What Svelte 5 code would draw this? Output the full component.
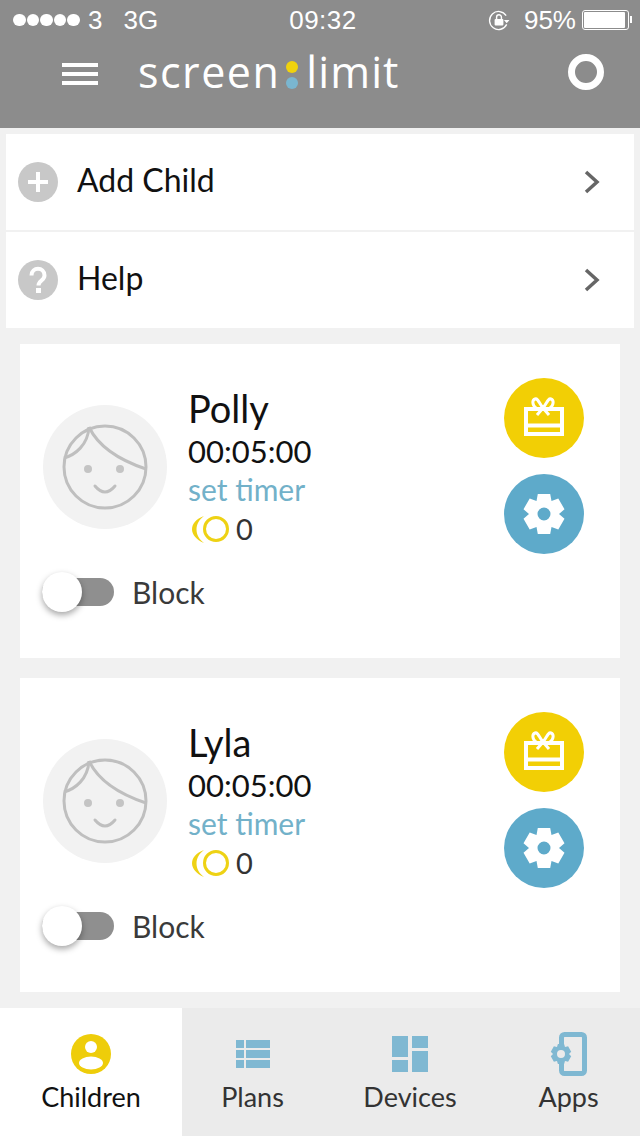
<script>
  const kids = [
    { name: "Polly", time: "00:05:00", coins: 0 },
    { name: "Lyla", time: "00:05:00", coins: 0 }
  ];
  const links = [
    { label: "Add Child", icon: "plus" },
    { label: "Help", icon: "help" }
  ];

  // cog outline, used by the settings button and the Apps tab
  function cog(cx, cy, outer, inner, hole) {
    let d = "";
    for (let i = 0; i < 6; i++) {
      const a = (i * Math.PI) / 3 - Math.PI / 2;
      const pts = [[inner, a - 0.52], [outer, a - 0.3], [outer, a + 0.3], [inner, a + 0.52]];
      for (const [r, t] of pts) {
        d += (d ? "L" : "M") + (cx + r * Math.cos(t)).toFixed(1) + " " + (cy + r * Math.sin(t)).toFixed(1);
      }
    }
    d += "Z";
    d += `M${cx - hole} ${cy}a${hole} ${hole} 0 1 0 ${hole * 2} 0a${hole} ${hole} 0 1 0 ${-hole * 2} 0Z`;
    return d;
  }
</script>

<div class="page">
  <header class="top">
    <div class="status">
      <div class="carrier">
        <span class="dots">
          {#each [0, 1, 2, 3, 4] as d}<i></i>{/each}
        </span>
        <span>3</span>
        <span class="net">3G</span>
      </div>
      <div class="clock">09:32</div>
      <div class="power">
        <svg class="lock" width="22" height="22" viewBox="0 0 20 20">
          <path d="M16.5 6A8.2 8.2 0 1 0 17 14" fill="none" stroke="#fff" stroke-width="1.2" />
          <path d="M14.5 10h5l-2.500 3z" fill="#fff" />
          <rect x="6" y="9" width="8" height="6" rx="1" fill="#fff" />
          <path d="M7.800 9V7.500a2.200 2.200 0 0 1 4.400 0V9" fill="none" stroke="#fff" stroke-width="1.300" />
        </svg>
        <span class="pct">95%</span>
        <span class="battery"><b></b></span>
      </div>
    </div>
    <nav class="bar">
      <div class="burger"><i></i><i></i><i></i></div>
      <div class="logo">
        <span>screen</span>
        <span class="colon"><i class="y"></i><i class="b"></i></span>
        <span class="limit">limit</span>
      </div>
      <div class="ring"></div>
    </nav>
  </header>

  <section class="links">
    {#each links as link}
      <div class="link">
        <span class="round">
          {#if link.icon === "plus"}
            <svg width="40" height="40" viewBox="0 0 40 40">
              <path d="M20 10v20M10 20h20" stroke="#fff" stroke-width="4" />
            </svg>
          {:else}
            <svg width="40" height="40" viewBox="0 0 40 40">
              <path d="M13.500 15.500c0-9 13-9 13 0 0 5-6 5-6 10" fill="none" stroke="#fff" stroke-width="4" />
              <rect x="18" y="28" width="5" height="5" fill="#fff" />
            </svg>
          {/if}
        </span>
        <span class="link_label">{link.label}</span>
        <svg class="chev" width="18" height="26" viewBox="0 0 18 26">
          <path d="M3 3l11 10L3 23" fill="none" stroke="#666" stroke-width="3.500" />
        </svg>
      </div>
    {/each}
  </section>

  {#each kids as kid}
    <article class="card">
      <div class="left">
        <div class="who">
          <svg class="avatar" width="124" height="124" viewBox="0 0 124 124">
            <circle cx="62" cy="62" r="62" fill="#f2f2f2" />
            <g fill="none" stroke="#bfbfbf" stroke-width="3">
              <circle cx="62" cy="62" r="41" />
              <path d="M46 22C57 45 82 57 103 64" />
              <path d="M46 22C45 40 32 50 21 53" />
              <path d="M52 81Q62 93 72 81" stroke-linecap="round" />
            </g>
            <circle cx="45" cy="64" r="4" fill="#c4c4c4" />
            <circle cx="77" cy="64" r="4" fill="#c4c4c4" />
          </svg>
          <div class="info">
            <div class="name">{kid.name}</div>
            <div class="time">{kid.time}</div>
            <div class="timer_link">set timer</div>
            <div class="coins">
              <svg width="38" height="30" viewBox="0 0 38 30">
                <circle cx="25" cy="15" r="11.500" fill="none" stroke="#eed214" stroke-width="3" />
                <path d="M13 2C-3 8-3 22 13 29C3 22 3 9 13 2Z" fill="#eed214" />
              </svg>
              <span>{kid.coins}</span>
            </div>
          </div>
        </div>
        <div class="block">
          <div class="toggle"><span class="thumb"></span></div>
          <span>Block</span>
        </div>
      </div>
      <div class="actions">
        <button class="act gift" aria-label="gift">
          <svg width="80" height="80" viewBox="0 0 80 80">
            <g fill="none" stroke="#fff" stroke-width="4">
              <path d="M22 56V31H58V56Z" />
              <path d="M22 47.500H58" />
              <path d="M39 30C35 25 34 20 31 21C28 22 28 27 32 30M39 30C43 25 44 20 47 21C50 22 50 27 46 30" stroke-width="3" />
              <path d="M39 30L33 37M39 30L45 37" stroke-width="3" />
            </g>
          </svg>
        </button>
        <button class="act gear" aria-label="settings">
          <svg width="80" height="80" viewBox="0 0 80 80">
            <path d={cog(40, 40, 21, 15, 6.5)} fill="#fff" fill-rule="evenodd" />
          </svg>
        </button>
      </div>
    </article>
  {/each}

  <footer class="tabs">
    <div class="tab on">
      <svg width="40" height="40" viewBox="0 0 40 40">
        <circle cx="20" cy="20" r="20" fill="#eecd0a" />
        <circle cx="20" cy="13" r="6" fill="#fff" />
        <ellipse cx="20" cy="29" rx="12" ry="6.500" fill="#fff" />
      </svg>
      <span>Children</span>
    </div>
    <div class="tab">
      <svg width="40" height="40" viewBox="0 0 40 40">
        <g fill="#7fb8d2">
          <rect x="3" y="6" width="8" height="8" />
          <rect x="13" y="6" width="24" height="8" />
          <rect x="3" y="16" width="8" height="8" />
          <rect x="13" y="16" width="24" height="8" />
          <rect x="3" y="26" width="8" height="8" />
          <rect x="13" y="26" width="24" height="8" />
        </g>
      </svg>
      <span>Plans</span>
    </div>
    <div class="tab">
      <svg width="40" height="40" viewBox="0 0 40 40">
        <g fill="#7fb8d2">
          <rect x="2" y="2" width="16" height="21" />
          <rect x="2" y="26" width="16" height="12" />
          <rect x="22" y="2" width="16" height="12" />
          <rect x="22" y="17" width="16" height="21" />
        </g>
      </svg>
      <span>Devices</span>
    </div>
    <div class="tab">
      <svg class="apps" width="40" height="46" viewBox="0 0 40 46">
        <path d="M12.500 13V6.500a3 3 0 0 1 3-3H32.500a3 3 0 0 1 3 3v33a3 3 0 0 1-3 3H15.500a3 3 0 0 1-3-3v-7" fill="none" stroke="#7fb8d2" stroke-width="5" />
        <path d={cog(12, 23, 10.5, 8, 4)} fill="#7fb8d2" fill-rule="evenodd" />
      </svg>
      <span>Apps</span>
    </div>
  </footer>
</div>

<style>
:global(body){
  margin: 0;
  background: #f1f1f1;
}

.page{
  width: 640px;
  height: 1136px;
  overflow: hidden;
  background: #f1f1f1;
  font-family: Lato, "Open Sans", sans-serif;
  display: flex;
  flex-direction: column;
}

.top{
  height: 128px;
  background: #8c8c8c;
  color: #fff;
  flex: none;
}

.status{
  height: 40px;
  padding: 0 11px 0 13px;
  display: grid;
  grid-template-columns: 1fr auto 1fr;
  align-items: center;
  font-family: "Liberation Sans", sans-serif;
  font-size: 26px;
}

.carrier{
  display: flex;
  align-items: center;
  gap: 8px;
}

.net{
  margin-left: 13px;
}

.dots{
  display: flex;
  gap: 1px;
}

.dots i{
  width: 12.600px;
  height: 12.600px;
  border-radius: 50%;
  background: #fff;
}

.clock{
  font-size: 26px;
  letter-spacing: .5px;
  padding-left: 4px;
}

.power{
  display: flex;
  justify-content: flex-end;
  align-items: center;
}

.lock{
  margin-right: 14px;
}

.pct{
  margin-right: 6px;
}

.battery{
  width: 43px;
  height: 16px;
  border: 1px solid #fff;
  border-radius: 3px;
  padding: 1px;
  position: relative;
  display: block;
}

.battery b{
  display: block;
  width: 95%;
  height: 100%;
  background: #fff;
  border-radius: 1px;
}

.battery::after{
  content: "";
  position: absolute;
  right: -4px;
  top: 5px;
  width: 2px;
  height: 7px;
  background: #fff;
}

.bar{
  display: flex;
  align-items: center;
  height: 68px;
  padding: 0 36px 0 62px;
}

.burger{
  width: 36px;
  display: flex;
  flex-direction: column;
  gap: 5px;
}

.burger i{
  height: 4px;
  background: #fff;
}

.logo{
  margin-left: 40px;
  margin-top: -4px;
  display: flex;
  align-items: center;
  font-family: "Open Sans", sans-serif;
  font-size: 43px;
  font-weight: 500;
  line-height: 48px;
  letter-spacing: 1.500px;
}

.limit{
  letter-spacing: 1.100px;
}

.colon{
  display: flex;
  flex-direction: column;
  gap: 4px;
  margin: 6px 8px 0 6px;
}

.colon i{
  width: 12px;
  height: 12px;
  border-radius: 50%;
}

.colon .y{
  background: #f0d20d;
}

.colon .b{
  background: #7ab6d0;
}

.ring{
  margin-left: auto;
  width: 22px;
  height: 22px;
  border: 7px solid #fff;
  border-radius: 50%;
  margin-top: -4px;
}

.links{
  margin: 6px 6px 0;
  display: flex;
  flex-direction: column;
  gap: 2px;
  flex: none;
}

.link{
  height: 96px;
  background: #fff;
  display: flex;
  align-items: center;
  padding: 0 33px 0 12px;
}

.round{
  width: 40px;
  height: 40px;
  border-radius: 50%;
  background: #c8c8c8;
  display: block;
}

.round svg{
  display: block;
}

.link_label{
  margin-left: 19px;
  margin-bottom: 6px;
  font-size: 32px;
  color: #111;
}

.chev{
  margin-left: auto;
}

.card{
  margin: 16px 20px 0;
  height: 314px;
  box-sizing: border-box;
  background: #fff;
  padding: 34px 36px 0 22px;
  display: flex;
  justify-content: space-between;
  flex: none;
}

.card + .card{
  margin-top: 20px;
}

.who{
  display: flex;
  align-items: flex-start;
  gap: 21px;
}

.avatar{
  display: block;
  flex: none;
  margin-top: 27px;
  margin-left: 1px;
}

.info{
  margin-top: 7px;
}

.name{
  font-size: 38px;
  line-height: 46px;
  color: #111;
}

.time{
  font-size: 31px;
  line-height: 40px;
  color: #111;
}

.timer_link{
  font-size: 30px;
  line-height: 36px;
  color: #72b1c9;
}

.coins{
  display: flex;
  align-items: center;
  gap: 7px;
  font-size: 29px;
  line-height: 44px;
  color: #333;
}

.coins svg{
  margin-left: 3px;
}

.block{
  display: flex;
  align-items: center;
  margin-top: 23px;
  font-size: 30px;
  color: #3a3a3a;
}

.toggle{
  width: 72px;
  height: 28px;
  background: #8f8f8f;
  border-radius: 14px;
  position: relative;
  margin-right: 18px;
}

.thumb{
  position: absolute;
  left: 0;
  top: -6px;
  width: 40px;
  height: 40px;
  border-radius: 50%;
  background: #fff;
  box-shadow: 0 3px 6px rgba(0,0,0,.35);
}

.actions{
  display: flex;
  flex-direction: column;
  gap: 16px;
}

.act{
  width: 80px;
  height: 80px;
  border: 0;
  padding: 0;
  border-radius: 50%;
  display: block;
}

.act svg{
  display: block;
}

.gift{
  background: #f2cf05;
}

.gear{
  background: #5eaaca;
}

.tabs{
  margin-top: 16px;
  height: 128px;
  flex: none;
  background: #ebebeb;
  display: grid;
  grid-template-columns: 182px 141px 174px 143px;
}

.tab{
  display: flex;
  flex-direction: column;
  align-items: center;
  padding-top: 26px;
  font-size: 27px;
  color: #333;
  line-height: 32px;
}

.tab svg{
  display: block;
  height: 40px;
  margin-bottom: 7px;
}

.tab svg.apps{
  height: 46px;
  margin-top: -3px;
  margin-bottom: 4px;
}

.tab.on{
  background: #fff;
  color: #111;
}
</style>
